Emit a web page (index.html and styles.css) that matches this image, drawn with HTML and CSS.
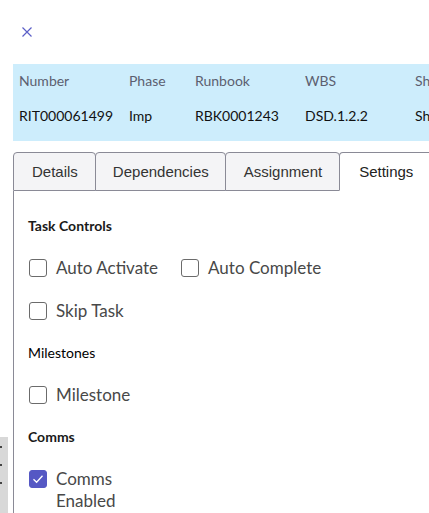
FILE: index.html
```html
<!DOCTYPE html>
<html>
<head>
<meta charset="utf-8">
<link rel="stylesheet" href="styles.css">
</head>
<body>
<div class="page">
  <div class="topbar">
    <button class="close" aria-label="Close">
      <svg width="10" height="10" viewBox="0 0 10 10"><path d="M0.5 0.5L9.5 9.5M9.5 0.5L0.5 9.5" stroke="#5b5fc7" stroke-width="1.2" fill="none"/></svg>
    </button>
  </div>
  <div class="summary">
    <div class="summary-grid">
      <div class="lbl">Number</div><div class="lbl">Phase</div><div class="lbl">Runbook</div><div class="lbl">WBS</div><div class="lbl">Short Description</div>
      <div class="val">RIT000061499</div><div class="val">Imp</div><div class="val">RBK0001243</div><div class="val">DSD.1.2.2</div><div class="val">Shared services</div>
    </div>
  </div>
  <div class="tabs">
    <div class="tab first">Details</div>
    <div class="tab">Dependencies</div>
    <div class="tab wide">Assignment</div>
    <div class="tab active">Settings</div>
  </div>
  <div class="panel">
    <div class="heading bold">Task Controls</div>
    <div class="row">
      <label class="check"><span class="box"></span><span class="text">Auto Activate</span></label>
      <label class="check"><span class="box"></span><span class="text">Auto Complete</span></label>
    </div>
    <div class="row">
      <label class="check"><span class="box"></span><span class="text">Skip Task</span></label>
    </div>
    <div class="heading medium">Milestones</div>
    <div class="row">
      <label class="check"><span class="box"></span><span class="text">Milestone</span></label>
    </div>
    <div class="heading bold">Comms</div>
    <div class="row">
      <label class="check"><span class="box checked"><svg width="12" height="10" viewBox="0 0 12 10"><path d="M1.5 5.2L4.6 8.2L10.5 1.8" stroke="#fff" stroke-width="1.3" fill="none"/></svg></span><span class="text narrow">Comms Enabled</span></label>
    </div>
  </div>
</div>
<div class="handle"><span></span><span></span><span></span></div>
</body>
</html>
```
FILE: styles.css
```css
html, body {
  margin: 0;
  padding: 0;
  overflow: hidden;
  background: #fff;
}
body {
  width: 429px;
  height: 513px;
  font-family: Lato, "Noto Sans", sans-serif;
  color: #242424;
  position: relative;
}
.page {
  padding-left: 13px;
  height: 513px;
  overflow: hidden;
}
.topbar {
  height: 64px;
  display: flex;
  align-items: flex-start;
}
.close {
  margin: 26px 0 0 8px;
  padding: 0;
  width: 12px;
  height: 12px;
  border: none;
  background: none;
  display: flex;
  align-items: center;
  justify-content: center;
}
.summary {
  background: #cdedfc;
  height: 77px;
  box-sizing: border-box;
  padding: 7px 0 0 6px;
  overflow: hidden;
}
.summary-grid {
  display: grid;
  grid-template-columns: 110px 66px 110px 110px 150px;
  row-gap: 15px;
  font-size: 14px;
  line-height: 20px;
  white-space: nowrap;
}
.lbl {
  color: #5c5f70;
}
.val {
  color: #111;
}
.tabs {
  margin-top: 11px;
  display: flex;
  height: 39px;
  font-family: "Liberation Sans", Arial, sans-serif;
  font-size: 15px;
}
.tab {
  box-sizing: border-box;
  height: 39px;
  padding: 0 16px 0 17px;
  display: flex;
  align-items: center;
  border: 1px solid #8a8a96;
  border-radius: 4px 4px 0 0;
  background: #f4f4f6;
  color: #333;
  margin-left: -1px;
  flex: 0 0 auto;
}
.tab.first {
  margin-left: 0;
  padding: 0 17px 0 18px;
}
.tab.wide {
  padding: 0 17px 0 18px;
}
.tab.active {
  background: #fff;
  border-bottom-color: #fff;
  color: #222;
  padding: 0 18px 0 19px;
}
.panel {
  border-left: 1px solid #8a8a96;
  padding: 25px 0 0 14px;
  height: 300px;
  display: flex;
  flex-direction: column;
  gap: 21px;
}
.heading {
  font-size: 14px;
  line-height: 20px;
  color: #1a1a1a;
}
.heading.bold {
  font-weight: 700;
}
.heading.medium {
  color: #000;
}
.row {
  display: flex;
  gap: 22px;
}
.check {
  display: flex;
  align-items: flex-start;
  gap: 9px;
  font-size: 17px;
  line-height: 22px;
  color: #484848;
}
.box {
  box-sizing: border-box;
  width: 18px;
  height: 18px;
  margin: 2px 0 0 1px;
  border: 1px solid #6b6b6b;
  border-radius: 3px;
  background: #fff;
  display: flex;
  align-items: center;
  justify-content: center;
  flex: 0 0 auto;
}
.box.checked {
  background: #5558c4;
  border-color: #5558c4;
}
.text.narrow {
  width: 70px;
}
.handle {
  position: absolute;
  left: 0;
  top: 437px;
  width: 8px;
  height: 76px;
  background: #d8d8d8;
}
.handle span {
  position: absolute;
  left: 0;
  width: 2px;
  height: 2px;
  background: #444;
}
.handle span:nth-child(1) { top: 9px; }
.handle span:nth-child(2) { top: 27px; }
.handle span:nth-child(3) { top: 45px; }
```
